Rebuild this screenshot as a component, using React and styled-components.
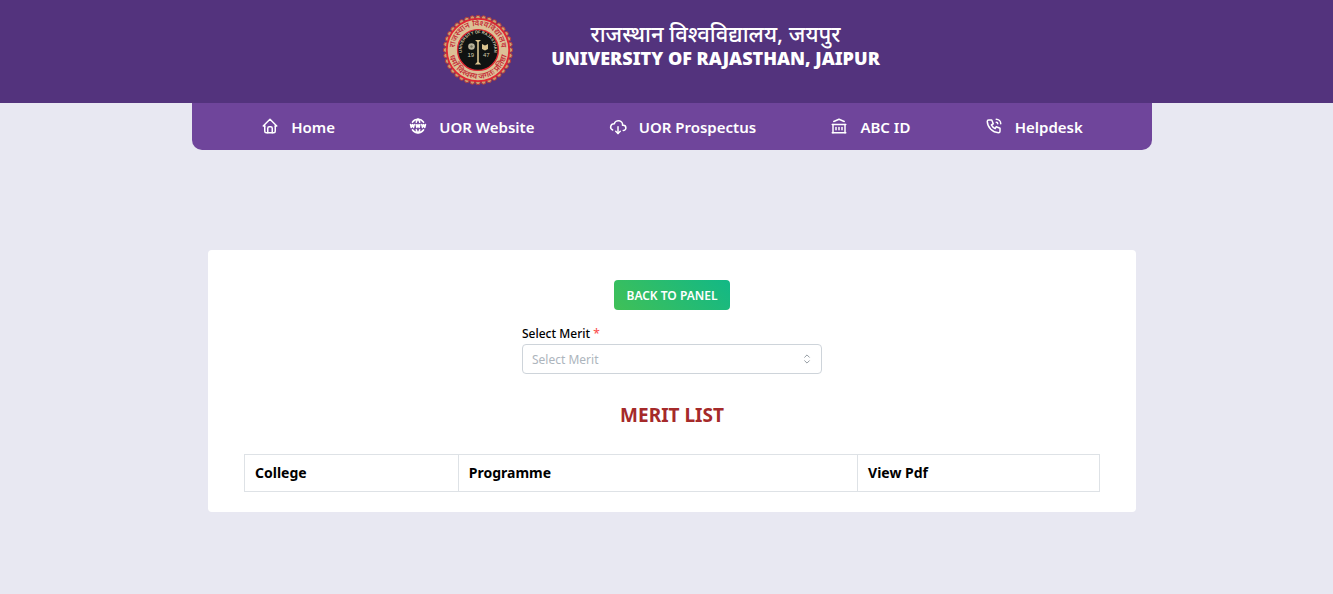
import React from 'react';
import styled, { createGlobalStyle } from 'styled-components';
import { TbHome, TbWorldWww, TbCloudDownload, TbBuildingBank, TbPhoneCall, TbSelector } from 'react-icons/tb';

const GlobalStyle = createGlobalStyle`
  *, *::before, *::after { box-sizing: border-box; }
  body {
    margin: 0;
    background: #e8e8f2;
    color: #000;
    font-family: "Segoe UI", "Noto Sans", "Open Sans", sans-serif;
  }
`;

const Header = styled.header`
  display: flex;
  justify-content: center;
  gap: 36px;
  min-height: 103px;
  padding: 14px 16px 17px 6px;
  background: #53337d;
  color: #fff;
`;

const Crest = styled.svg`
  flex: none;
  width: 72px;
  height: 72px;
`;

const Names = styled.div`
  padding-top: 7px;
  text-align: center;
`;

const HindiName = styled.div`
  font-size: 22px;
  line-height: 24px;
  font-weight: 500;
`;

const EnglishName = styled.h1`
  margin: 0;
  font-size: 18px;
  line-height: 26px;
  font-weight: 900;
`;

const Page = styled.div`
  display: flex;
  justify-content: center;
  padding-left: 11px;
`;

const Column = styled.div`
  flex: 1;
  max-width: 960px;
`;

const Nav = styled.nav`
  display: flex;
  justify-content: space-around;
  align-items: center;
  min-height: 47px;
  padding: 0 32px;
  border-radius: 0 0 10px 10px;
  background: #6f459b;
`;

const NavLink = styled.a`
  display: flex;
  align-items: center;
  gap: 12px;
  color: #fff;
  font-size: 15px;
  line-height: 24px;
  font-weight: 600;
  text-decoration: none;

  > svg { margin-bottom: 2px; }
`;

const Card = styled.main`
  display: flex;
  flex-direction: column;
  align-items: center;
  margin: 100px 16px 0;
  padding: 30px 36px 20px;
  border-radius: 4px;
  background: #fff;
`;

const BackButton = styled.button`
  height: 30px;
  padding: 0 12px;
  border: 0;
  border-radius: 4px;
  background: linear-gradient(45deg, #40c057, #12b886);
  color: #fff;
  font-family: inherit;
  font-size: 12px;
  font-weight: 600;
`;

const Field = styled.div`
  display: grid;
  grid-template-columns: minmax(0, 1fr);
  width: 300px;
  max-width: 100%;
  margin-top: 14px;
`;

const Label = styled.label`
  font-size: 12px;
  line-height: 20px;
  font-weight: 500;
`;

const Required = styled.span`
  color: #fa5252;
`;

const SelectBox = styled.div`
  display: grid;
  align-items: center;

  > * { grid-area: 1 / 1; }
  > svg {
    justify-self: end;
    margin-right: 8px;
    color: #868e96;
    stroke-width: 1.5;
    pointer-events: none;
  }
`;

const Select = styled.select`
  appearance: none;
  width: 100%;
  height: 30px;
  padding: 0 30px 0 9px;
  border: 1px solid #ced4da;
  border-radius: 4px;
  background: #fff;
  color: #adb5bd;
  font-family: inherit;
  font-size: 12px;
`;

const Title = styled.h2`
  margin: 27px 0 25px;
  color: #a52a2a;
  font-size: 19px;
  line-height: 28px;
  font-weight: 700;
`;

const Table = styled.table`
  width: 100%;
  table-layout: fixed;
  border-collapse: collapse;
`;

const HeadCell = styled.th`
  width: ${(p) => p.$width};
  height: 37px;
  padding: 0 10px;
  border: 1px solid #dee2e6;
  text-align: left;
  font-size: 14px;
  line-height: 22px;
  font-weight: 700;
`;

const links = [
  [TbHome, 'Home'],
  [TbWorldWww, 'UOR Website'],
  [TbCloudDownload, 'UOR Prospectus'],
  [TbBuildingBank, 'ABC ID'],
  [TbPhoneCall, 'Helpdesk'],
];

const columns = [
  ['College', '25%'],
  ['Programme', '46.7%'],
  ['View Pdf', '28.3%'],
];

function UniversityCrest() {
  const scallops = Array.from({ length: 36 }, (_, i) => {
    const a = (i * Math.PI) / 18;
    return <circle key={i} cx={35 + 32.4 * Math.cos(a)} cy={36 + 32.4 * Math.sin(a)} r="2.3" />;
  });
  return (
    <Crest viewBox="0 0 72 72" role="img" aria-label="University of Rajasthan crest">
      <defs>
        <path id="upperArc" d="M12 38a23.2 23.2 0 1 1 46 0" />
        <path id="lowerArc" d="M6 39a29.2 29.2 0 0 0 58 0" />
        <path id="innerArc" d="M20 42a16.3 16.3 0 1 1 30 0" />
      </defs>
      <g fill="#c8a070" stroke="#b3373d" strokeWidth="1">{scallops}</g>
      <circle cx="35" cy="36" r="31.2" fill="#dcc096" stroke="#e02733" strokeWidth="1.8" />
      <g fill="#c6303a" fontFamily="Noto Sans, sans-serif" fontWeight="600">
        <text fontSize="8" textAnchor="middle"><textPath href="#upperArc" startOffset="50%">राजस्थान विश्वविद्यालय</textPath></text>
        <text fontSize="8" textAnchor="middle"><textPath href="#lowerArc" startOffset="50%">धर्मो विश्वस्य जगतः प्रतिष्ठा</textPath></text>
      </g>
      <circle cx="35" cy="36" r="20.4" fill="#101312" stroke="#e02733" strokeWidth="1.4" />
      <g fill="#d8cdb0" fontFamily="Liberation Sans, sans-serif">
        <text fontSize="4" fontWeight="700" textAnchor="middle"><textPath href="#innerArc" startOffset="50%">UNIVERSITY OF RAJASTHAN</textPath></text>
        <text x="24.5" y="43" fontSize="6">19</text>
        <text x="40" y="43" fontSize="6">47</text>
      </g>
      <g fill="#d9c38f">
        <circle cx="28.5" cy="32.5" r="3.3" fill="#b9b29b" />
        <circle cx="28.5" cy="32.5" r="1.2" fill="#77735f" />
        <path d="M39 30l3 1.5 3-1.5v5l-3 1.5-3-1.5z" />
        <path d="M32 26h6l-2.2 2v20l2.4 2.5h-6.4l2.4-2.5v-20z" />
      </g>
    </Crest>
  );
}

export default function App() {
  return (
    <>
      <GlobalStyle />
      <Header>
        <UniversityCrest />
        <Names>
          <HindiName lang="hi">राजस्थान विश्वविद्यालय, जयपुर</HindiName>
          <EnglishName>UNIVERSITY OF RAJASTHAN, JAIPUR</EnglishName>
        </Names>
      </Header>
      <Page>
        <Column>
          <Nav>
            {links.map(([Icon, text]) => (
              <NavLink key={text} href="#">
                <Icon size={18} aria-hidden="true" />
                {text}
              </NavLink>
            ))}
          </Nav>
          <Card>
            <BackButton type="button">BACK TO PANEL</BackButton>
            <Field>
              <Label htmlFor="merit">
                Select Merit <Required aria-hidden="true">*</Required>
              </Label>
              <SelectBox>
                <Select id="merit" required defaultValue="">
                  <option value="">Select Merit</option>
                </Select>
                <TbSelector size={14} aria-hidden="true" />
              </SelectBox>
            </Field>
            <Title>MERIT LIST</Title>
            <Table>
              <thead>
                <tr>
                  {columns.map(([name, width]) => (
                    <HeadCell key={name} scope="col" $width={width}>{name}</HeadCell>
                  ))}
                </tr>
              </thead>
            </Table>
          </Card>
        </Column>
      </Page>
    </>
  );
}
